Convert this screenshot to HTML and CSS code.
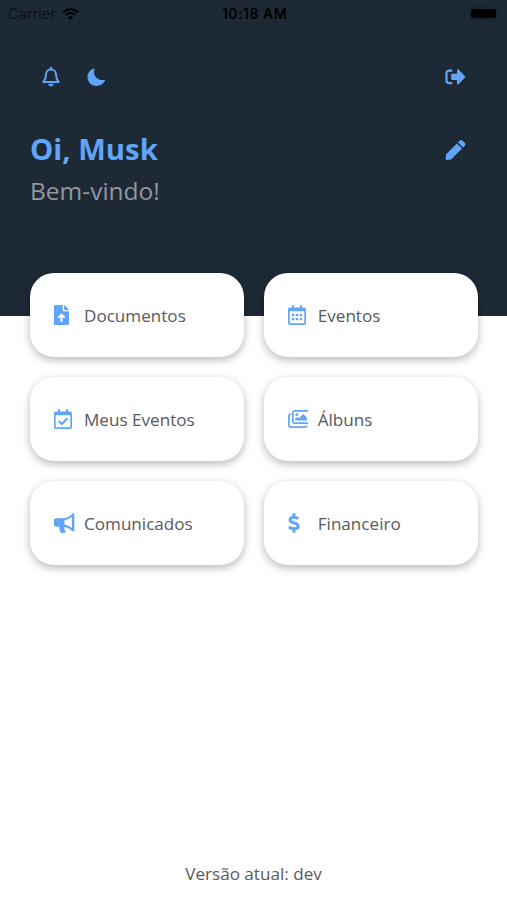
FILE: index.html
```html
<!DOCTYPE html>
<html lang="pt-BR">
<head>
    <meta charset="utf-8">
    <meta name="viewport" content="width=device-width, initial-scale=1">
    <title>Início</title>
    <link rel="stylesheet" href="styles.css">
</head>
<body>
    <header class="header">
        <div class="status">
            <div class="carrier">
                <span>Carrier</span>
                <svg width="17" height="12" viewBox="0 0 17 12">
                    <path d="M1 4.3a10.6 10.6 0 0 1 15 0M3.6 7a7 7 0 0 1 9.8 0" fill="none" stroke="#000" stroke-width="2.1"/>
                    <path d="M8.5 12 5.8 9.2a3.9 3.9 0 0 1 5.4 0z"/>
                </svg>
            </div>
            <span class="time">10:18 AM</span>
            <svg class="battery" width="32" height="13" viewBox="0 0 32 13">
                <rect x=".5" y=".5" width="27" height="12" rx="3.5" fill="none" stroke="#18212c"/>
                <rect x="2" y="2" width="25" height="9" rx="2"/>
                <path d="M29.5 5v3.5c1.5-.5 1.5-3 0-3.5z" fill="#131a23"/>
            </svg>
        </div>

        <div class="toolbar">
            <svg class="icon" width="18" height="20" viewBox="0 0 18 20">
                <path d="M9 2.5C5.7 2.5 4 5 4 7.7c0 3.300-.9 5.200-2.600 7.200h15.200C14.900 12.900 14 11 14 7.700 14 5 12.300 2.500 9 2.500z" fill="none" stroke="currentColor" stroke-width="2" stroke-linejoin="round"/>
                <path d="M7.700 1a1.300 1.300 0 0 1 2.600 0V3H7.700zM6.400 16.700h5.200a2.600 2.600 0 0 1-5.200 0z"/>
            </svg>
            <svg class="icon" width="19" height="19" viewBox="0 0 19 19">
                <path d="M6.900.4C3 1.700.5 5 .5 9c0 5 4 9 9 9 3.600 0 7-2.200 8.500-5.400.2-.5-.1-.8-.6-.7C11 13 5.500 8 7.400 1.200c.2-.6 0-.9-.5-.8z"/>
            </svg>
            <svg class="icon exit" width="21" height="16" viewBox="0 0 21 16">
                <path d="M7.300 1.600H4.200a2.700 2.700 0 0 0-2.700 2.700v7.200a2.700 2.700 0 0 0 2.700 2.700h3.100" fill="none" stroke="currentColor" stroke-width="2.200"/>
                <path d="M12 1.100v3.600H7.200c-.6 0-1 .4-1 1v4.400c0 .6.4 1 1 1H12v3.600c0 .8.9 1.200 1.500.6l6.500-6.700c.4-.4.4-.9 0-1.300L13.500.5C12.900-.1 12 .3 12 1.100z"/>
            </svg>
        </div>

        <div class="welcome">
            <div>
                <h1>Oi, Musk</h1>
                <p>Bem-vindo!</p>
            </div>
            <svg class="icon" width="21" height="20" viewBox="0 0 20 20">
                <path d="m11.400 3.500 5.100 5.100L5.600 19.400l-4.400.6c-.7.100-1.200-.4-1.100-1.100l.5-4.600zM12.400 2.500 14.300.6c.8-.8 1.900-.8 2.700 0L19.400 3c.8.8.8 1.900 0 2.700l-1.900 1.900z"/>
            </svg>
        </div>
    </header>

    <main class="menu">
        <a class="card">
            <span class="card-icon">
                <svg class="icon" width="15" height="20" viewBox="0 0 15 20">
                    <path fill-rule="evenodd" d="M1 0h7.700v5.300c0 .6.400 1 1 1H15V19c0 .6-.4 1-1 1H1c-.6 0-1-.4-1-1V1c0-.6.400-1 1-1zm5.500 16.800h2v-4h2.300c.5 0 .7-.5.400-.9L7.900 8.700a.6.600 0 0 0-.8 0l-3.300 3.200c-.3.400-.1.900.4.900h2.300z"/>
                    <path d="M10.100 0h.3l4.300 4.300.3.600H10.100z"/>
                </svg>
            </span>
            Documentos
        </a>
        <a class="card">
            <span class="card-icon">
                <svg class="icon" width="18" height="20" viewBox="0 0 18 20">
                    <path fill-rule="evenodd" d="M2 2.500h2V.6c0-.8 2-.8 2 0v1.900h6V.6c0-.8 2-.8 2 0v1.900h2c1.100 0 2 .9 2 2V18c0 1.100-.9 2-2 2H2c-1.100 0-2-.9-2-2V4.500c0-1.100.900-2 2-2zM1.700 6.300V18c0 .2.100.3.300.3h14c.2 0 .3-.1.300-.3V6.300z"/>
                    <path d="M3.900 8.900h2.400v2.400H3.900zM7.800 8.900h2.400v2.400H7.800zM11.700 8.900h2.400v2.400h-2.400zM3.900 12.900h2.400v2.400H3.900zM7.800 12.900h2.400v2.400H7.800zM11.700 12.900h2.400v2.400h-2.400z"/>
                </svg>
            </span>
            Eventos
        </a>
        <a class="card">
            <span class="card-icon">
                <svg class="icon" width="18" height="20" viewBox="0 0 18 20">
                    <path fill-rule="evenodd" d="M2 2.500h2V.6c0-.8 2-.8 2 0v1.900h6V.6c0-.8 2-.8 2 0v1.900h2c1.100 0 2 .9 2 2V18c0 1.100-.9 2-2 2H2c-1.100 0-2-.9-2-2V4.500c0-1.100.900-2 2-2zM1.700 6.300V18c0 .2.100.3.300.3h14c.2 0 .3-.1.300-.3V6.300z"/>
                    <path d="m4.700 12 3 3 5.800-5.800" fill="none" stroke="currentColor" stroke-width="2"/>
                </svg>
            </span>
            Meus Eventos
        </a>
        <a class="card">
            <span class="card-icon">
                <!-- last columns of the glyph are cut by the icon box -->
                <svg class="icon" width="20" height="18" viewBox="0 0 20 18">
                    <path d="M20 .9H6.500a1.600 1.600 0 0 0-1.600 1.600v9a1.600 1.600 0 0 0 1.600 1.600H20M3.200 4.200H2.500A1.600 1.600 0 0 0 .9 5.800v9.700a1.600 1.600 0 0 0 1.600 1.600h14.800a1.600 1.600 0 0 0 1.600-1.600" fill="none" stroke="currentColor" stroke-width="1.700"/>
                    <circle cx="8.800" cy="4.600" r="1.500"/>
                    <path d="M7.300 10.500V8.700l2-2 1.700 1.600 3.700-3.800c.4-.4.700-.4 1.100 0l3.200 3.300v2.700z"/>
                </svg>
            </span>
            Álbuns
        </a>
        <a class="card">
            <span class="card-icon">
                <svg class="icon" width="21" height="20" viewBox="0 0 21 20">
                    <path fill-rule="evenodd" d="M2 5.300h6.500c3.800 0 7-1.500 9.800-4.500.7-.8 2-.5 2 .6v16.200c0 1.100-1.200 1.300-2 .5-2.300-2.300-4.700-3.700-7.700-4.200-.8 2 .1 3.500 1 4.400.6.900-.4 1.700-2.200 1.700H7.700c-.7 0-1.100-.3-1.400-1-.8-1.600-1.200-3.300-.8-5.300H2c-1.200 0-2-.8-2-2V7.300c0-1.200.800-2 2-2zm8.500 1.900v4.300c2.700.4 5.200 1.600 7.400 3.500V3.700c-2.200 1.900-4.700 3.100-7.400 3.500z"/>
                </svg>
            </span>
            Comunicados
        </a>
        <a class="card">
            <span class="card-icon">
                <svg class="icon" width="12" height="20" viewBox="0 0 12 20">
                    <path d="M10.400 5.600C9 4.700 7.500 4.200 6 4.200 3.800 4.200 2 5 2 6.900 2 10.700 10.200 9 10.200 12.900c0 1.900-1.900 2.900-4.200 2.900-1.900 0-3.500-.6-5.200-1.700M6 .3v3.700M6 16v3.700" fill="none" stroke="currentColor" stroke-width="3"/>
                </svg>
            </span>
            Financeiro
        </a>
    </main>

    <footer class="footer">Versão atual: dev</footer>
</body>
</html>
```
FILE: styles.css
```css
* {
    box-sizing: border-box;
}

body {
    margin: 0;
    height: 900px;
    display: flex;
    flex-direction: column;
    background: #fff;
    color: #58595d;
    font-family: "Open Sans", "Noto Sans", sans-serif;
    font-size: 17.1px;
}

.header {
    height: 316px;
    background: #1e2936;
}

.status {
    display: grid;
    grid-template-columns: 1fr auto 1fr;
    align-items: center;
    height: 27px;
    padding: 0 6px 0 8px;
    color: #000;
    font-family: Inter, "Liberation Sans", sans-serif;
    font-size: 14px;
}

.carrier {
    display: flex;
    align-items: center;
    gap: 6px;
    color: #0b0f14;
    letter-spacing: 0.3px;
}

.time {
    font-weight: 600;
    letter-spacing: 0.5px;
}

.battery {
    justify-self: end;
}

.icon {
    display: block;
    color: #60a5fa;
    fill: currentColor;
}

.toolbar {
    display: flex;
    align-items: center;
    gap: 27px;
    height: 40px;
    margin-top: 30px;
    padding: 0 41px 0 42px;
}

.exit {
    margin-left: auto;
}

.welcome {
    display: flex;
    justify-content: space-between;
    margin-top: 31px;
    padding: 0 41px 0 30px;
}

.welcome .icon {
    margin-top: 12px;
}

.welcome h1 {
    margin: 0;
    color: #60a5fa;
    font-size: 29.3px;
    line-height: 42px;
}

.welcome p {
    margin: 0;
    color: #9397a0;
    font-size: 24.5px;
    line-height: 42px;
}

.menu {
    display: grid;
    grid-template-columns: 1fr 1fr;
    grid-auto-rows: 84px;
    gap: 20px;
    margin-top: -43px;
    padding: 0 29.5px 0 30px;
}

.card {
    display: flex;
    align-items: center;
    padding-left: 24px;
    border-radius: 24px;
    background: #fff;
    box-shadow: 0 3px 8px rgba(0, 0, 0, 0.28);
}

.card-icon {
    width: 30px;
}

.footer {
    margin-top: auto;
    padding-bottom: 15px;
    text-align: center;
}
```
